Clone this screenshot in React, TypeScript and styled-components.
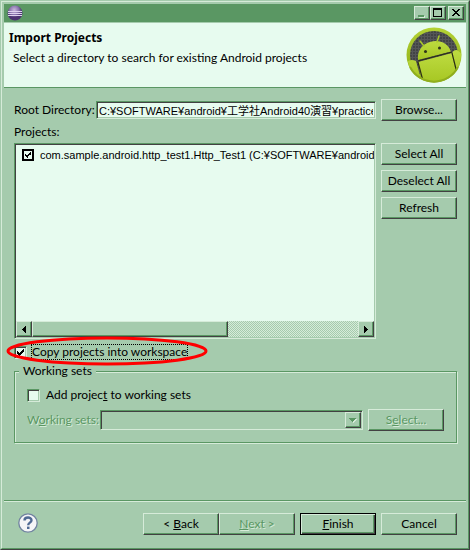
import React, { useState } from "react";
import styled, { createGlobalStyle, css } from "styled-components";

const face = "#a5cbad";
const shade = "#5a9763";
const light = "#d6ebd9";
const dark = "#424142";
const paper = "#e7fbef";

const GlobalStyle = createGlobalStyle`
  *, *::before, *::after { box-sizing: border-box; }
  html, body { margin: 0; padding: 0; }
  body { background: ${face}; }
  body, button, input, select, legend {
    font-family: Lato, "Noto Sans CJK JP", sans-serif;
    font-size: 12px;
    line-height: 14px;
    color: #000;
  }
`;

const raised = css`
  border: 1px solid;
  border-color: ${light} ${dark} ${dark} ${light};
  box-shadow: inset -1px -1px 0 ${shade};
  background: ${face};
`;

const sunken = css`
  border: 1px solid;
  border-color: ${shade} ${light} ${light} ${shade};
  box-shadow: inset 1px 1px 0 ${dark}, inset -1px -1px 0 ${face};
`;

const pathFont = css`
  font-family: "Liberation Sans", "Noto Sans CJK JP", sans-serif;
  font-size: 11px;
`;

const Frame = styled.div`
  min-height: 100vh;
  display: flex;
  flex-direction: column;
  border: 1px solid;
  border-color: ${face} ${dark} ${dark} ${face};
  background: ${face};
`;

const Inner = styled.main`
  flex: 1;
  display: flex;
  flex-direction: column;
  border: 1px solid;
  border-color: ${light} ${shade} ${shade} ${light};
  padding: 2px;
`;

const TitleBar = styled.header`
  height: 18px;
  display: flex;
  align-items: center;
  padding: 0 2px 0 3px;
  background: ${shade};
`;

const WindowButtons = styled.div`
  display: flex;
  margin-left: auto;
`;

const WindowButton = styled.button<{ $apart?: boolean }>`
  ${raised}
  width: 16px;
  height: 14px;
  padding: 0;
  margin-left: ${(p) => (p.$apart ? 2 : 0)}px;
  svg { display: block; }
`;

const Banner = styled.section`
  display: flex;
  justify-content: space-between;
  height: 65px;
  margin-top: 1px;
  padding: 4px 4px 0 5px;
  background: ${paper};
  border-bottom: 1px solid ${shade};
`;

const BannerText = styled.div`
  padding-top: 2px;
`;

const Heading = styled.h1`
  margin: 0;
  font: bold 12px/18px "Noto Sans", sans-serif;
`;

const Message = styled.p`
  margin: 4px 0 0 4px;
`;

const Content = styled.div`
  padding: 11px 9px 0 10px;
`;

const Row = styled.div`
  display: flex;
  align-items: center;
  gap: 5px;
`;

const Button = styled.button<{ $default?: boolean }>`
  ${raised}
  flex: none;
  width: 76px;
  height: 22px;
  padding: 0;
  white-space: nowrap;
  ${(p) =>
    p.$default &&
    css`
      border-color: #000;
      box-shadow: inset 1px 1px 0 ${light}, inset -1px -1px 0 ${dark}, inset -2px -2px 0 ${shade};
    `}
  &:disabled {
    color: ${shade};
    text-shadow: 1px 1px 0 ${light};
  }
`;

const FieldLabel = styled.label<{ $disabled?: boolean }>`
  flex: none;
  width: 77px;
  white-space: nowrap;
  ${(p) => p.$disabled && css`color: ${shade}; text-shadow: 1px 1px 0 ${light}; width: 68px;`}
`;

const TextField = styled.input`
  ${sunken}
  ${pathFont}
  flex: 1;
  min-width: 0;
  height: 18px;
  padding: 0 2px;
  border-radius: 0;
  background: ${paper};
  outline: none;
`;

const ProjectsLabel = styled.div`
  margin: 4px 0;
`;

const ProjectsRow = styled.div`
  display: flex;
  gap: 5px;
`;

const ListBox = styled.div`
  ${sunken}
  flex: 1;
  min-width: 0;
  height: 196px;
  padding: 1px;
  display: flex;
  flex-direction: column;
  background: ${paper};
`;

const ListItem = styled.label`
  ${pathFont}
  flex: 1;
  display: flex;
  align-items: flex-start;
  gap: 6px;
  padding: 3px 0 0 6px;
  overflow: hidden;
  white-space: nowrap;
`;

const tick = `url("data:image/svg+xml,%3Csvg xmlns='http://www.w3.org/2000/svg' viewBox='0 0 7 7' width='7' height='7' shape-rendering='crispEdges'%3E%3Cpath d='M0 2h1v1h1v1h1v-1h1v-1h1v-1h1v-1h1v3h-1v1h-1v1h-1v1h-1v1h-1v-1h-1v-1h-1z'/%3E%3C/svg%3E")`;

const CheckBox = styled.input.attrs({ type: "checkbox" })<{ $bold?: boolean }>`
  appearance: none;
  flex: none;
  width: 13px;
  height: 13px;
  margin: 0;
  ${sunken}
  background-color: ${paper};
  background-position: center;
  background-repeat: no-repeat;
  ${(p) => p.$bold && css`width: 12px; height: 12px; margin-top: 1px; border: 2px solid #000; box-shadow: none; background-size: 6px 6px;`}
  &:checked { background-image: ${tick}; }
`;

const ScrollBar = styled.div`
  display: flex;
  height: 16px;
  background: repeating-conic-gradient(${face} 0 25%, ${light} 0 50%) 0 0 / 2px 2px;
`;

const ScrollArrow = styled.button`
  ${raised}
  width: 16px;
  height: 16px;
  padding: 0;
  svg { display: block; margin: auto; }
`;

const ScrollThumb = styled.div`
  ${raised}
  width: 60%;
`;

const ScrollTrack = styled.div`
  flex: 1;
  display: flex;
`;

const ButtonColumn = styled.div`
  display: flex;
  flex-direction: column;
  gap: 5px;
`;

const CopyRow = styled.div`
  position: relative;
  display: flex;
  width: fit-content;
  margin-top: 5px;
`;

const CheckLabel = styled.label<{ $focus?: boolean }>`
  display: flex;
  align-items: center;
  gap: ${(p) => (p.$focus ? 4 : 6)}px;
`;

const FocusText = styled.span`
  border: 1px dotted #000;
`;

const Highlight = styled.svg`
  position: absolute;
  left: -8px;
  top: -8px;
  pointer-events: none;
`;

const Group = styled.fieldset`
  margin: 4px 0 0;
  min-width: 0;
  padding: 10px 12px 11px;
  border: 1px solid ${shade};
  box-shadow: 1px 1px 0 ${light}, inset 1px 1px 0 ${light};
`;

const Legend = styled.legend`
  margin-left: -8px;
  padding: 0 4px;
  background: ${face};
`;

const SetsRow = styled(Row)`
  margin-top: 7px;
`;

const Combo = styled.div`
  ${sunken}
  position: relative;
  flex: 1;
  min-width: 0;
  height: 20px;
`;

const ComboSelect = styled.select`
  appearance: none;
  display: block;
  width: 100%;
  height: 100%;
  border: 0;
  background: transparent;
`;

const ComboArrow = styled.span`
  ${raised}
  position: absolute;
  top: 1px;
  right: 1px;
  bottom: 1px;
  width: 16px;
  display: grid;
  place-items: center;
  pointer-events: none;
`;

const Footer = styled.footer`
  margin-top: auto;
  padding: 12px 9px 11px 14px;
  display: flex;
  align-items: flex-start;
  border-top: 1px solid ${shade};
  box-shadow: inset 0 1px 0 ${light};
`;

const HelpButton = styled.button`
  padding: 0;
  border: 0;
  background: none;
  svg { display: block; }
`;

const FooterButtons = styled.div`
  display: flex;
  gap: 5px;
  margin-left: auto;
`;

const Pair = styled.div`
  display: flex;
`;

function EclipseIcon() {
  return (
    <svg width="16" height="16" viewBox="0 0 16 16" aria-hidden="true">
      <defs>
        <radialGradient id="orb" cx="45%" cy="30%">
          <stop offset="0" stopColor="#c9b8de" />
          <stop offset="0.6" stopColor="#8a76ae" />
          <stop offset="1" stopColor="#4b3470" />
        </radialGradient>
      </defs>
      <circle cx="8" cy="8" r="7.5" fill="url(#orb)" />
      <path d="M1 6.5h14M1 8.5h14M1 10.5h14" stroke="#ddd2ee" strokeWidth="1" />
    </svg>
  );
}

function AndroidBadge() {
  return (
    <svg width="56" height="56" viewBox="0 0 56 56" role="img" aria-label="Android">
      <defs>
        <linearGradient id="rim" x1="0" y1="0" x2="0" y2="1">
          <stop offset="0" stopColor="#b4d234" />
          <stop offset="1" stopColor="#89a812" />
        </linearGradient>
        <linearGradient id="body" x1="0" y1="0" x2="0" y2="1">
          <stop offset="0" stopColor="#bddb40" />
          <stop offset="1" stopColor="#a6c622" />
        </linearGradient>
        <pattern id="mesh" width="3" height="3" patternUnits="userSpaceOnUse">
          <rect width="3" height="3" fill="#424345" />
          <path d="M0 .5h3M.5 0v3" stroke="#545557" />
        </pattern>
        <clipPath id="disc"><circle cx="28" cy="28" r="27" /></clipPath>
      </defs>
      <circle cx="28" cy="28" r="27.5" fill="url(#rim)" />
      <circle cx="28" cy="28" r="24" fill="url(#mesh)" />
      <g clipPath="url(#disc)">
        <path d="M12 33C11 24 16 17 24 15C33 12 42 16 45 24.5Z" fill="url(#body)" />
        <path d="M12 35L46 26L52 56H16Z" fill="url(#body)" />
        <path d="M0 36Q4 31 10 34L16 56H0ZM46 28Q46 23 51 23L57 28V56H52Z" fill="url(#body)" />
        <path d="M12 34L46 25M12 35L17 54M46 26L51 46" stroke="#2c3014" strokeWidth="1.2" fill="none" />
        <path d="M18 19L14 14M31 15L33 9" stroke="#a9c92a" strokeWidth="1.5" strokeLinecap="round" />
        <circle cx="19.5" cy="24.5" r="1.5" fill="#30351a" />
        <circle cx="33.5" cy="21" r="1.5" fill="#30351a" />
      </g>
      <path d="M4 40A27 27 0 0 0 52 40" fill="none" stroke="#90ae1d" strokeWidth="2" />
    </svg>
  );
}

export default function App() {
  const [project, setProject] = useState(true);
  const [copy, setCopy] = useState(true);
  const [sets, setSets] = useState(false);
  const [root, setRoot] = useState("C:¥SOFTWARE¥android¥工学社Android40演習¥practice");

  return (
    <>
      <GlobalStyle />
      <Frame>
        <Inner>
          <TitleBar>
            <EclipseIcon />
            <WindowButtons>
              <WindowButton aria-label="Minimize" disabled>
                <svg width="14" height="12" shapeRendering="crispEdges">
                  <path d="M4 9h6v2H4z" fill={light} />
                  <path d="M3 8h6v2H3z" fill={shade} />
                </svg>
              </WindowButton>
              <WindowButton aria-label="Maximize">
                <svg width="14" height="12" shapeRendering="crispEdges">
                  <path d="M2 1h9v9H2zM3 3v6h7V3z" fillRule="evenodd" />
                </svg>
              </WindowButton>
              <WindowButton aria-label="Close" $apart>
                <svg width="14" height="12" shapeRendering="crispEdges">
                  <path d="M3 2h2v1h1v1h2V3h1V2h2v1h-1v1H9v1H8v1h1v1h1v1h1v1H9V8H8V7H6v1H5v1H3V8h1V7h1V6h1V5H5V4H4V3H3z" />
                </svg>
              </WindowButton>
            </WindowButtons>
          </TitleBar>

          <Banner>
            <BannerText>
              <Heading>Import Projects</Heading>
              <Message>Select a directory to search for existing Android projects</Message>
            </BannerText>
            <AndroidBadge />
          </Banner>

          <Content>
            <Row>
              <FieldLabel htmlFor="root">Root Directory:</FieldLabel>
              <TextField id="root" value={root} onChange={(e) => setRoot(e.target.value)} />
              <Button>Browse...</Button>
            </Row>
            <ProjectsLabel>Projects:</ProjectsLabel>
            <ProjectsRow>
              <ListBox>
                <ListItem>
                  <CheckBox $bold checked={project} onChange={() => setProject(!project)} />
                  com.sample.android.http_test1.Http_Test1 (C:¥SOFTWARE¥android
                </ListItem>
                <ScrollBar>
                  <ScrollArrow aria-label="Scroll left">
                    <svg width="4" height="7" shapeRendering="crispEdges"><path d="M4 0v7H3V6H2V5H1V4H0V3h1V2h1V1h1V0z" /></svg>
                  </ScrollArrow>
                  <ScrollTrack><ScrollThumb /></ScrollTrack>
                  <ScrollArrow aria-label="Scroll right">
                    <svg width="4" height="7" shapeRendering="crispEdges"><path d="M0 0v7h1V6h1V5h1V4h1V3H3V2H2V1H1V0z" /></svg>
                  </ScrollArrow>
                </ScrollBar>
              </ListBox>
              <ButtonColumn>
                <Button>Select All</Button>
                <Button>Deselect All</Button>
                <Button>Refresh</Button>
              </ButtonColumn>
            </ProjectsRow>

            <CopyRow>
              <CheckLabel $focus>
                <CheckBox checked={copy} onChange={() => setCopy(!copy)} />
                <FocusText>Copy projects into workspace</FocusText>
              </CheckLabel>
              <Highlight width="202" height="30" viewBox="0 0 202 30" aria-hidden="true">
                <ellipse cx="101" cy="15" rx="99" ry="13" fill="none" stroke="#f00" strokeWidth="3" />
              </Highlight>
            </CopyRow>

            <Group>
              <Legend>Working sets</Legend>
              <CheckLabel>
                <CheckBox checked={sets} onChange={() => setSets(!sets)} />
                <span>Add projec<u>t</u> to working sets</span>
              </CheckLabel>
              <SetsRow>
                <FieldLabel htmlFor="sets" $disabled>W<u>o</u>rking sets:</FieldLabel>
                <Combo>
                  <ComboSelect id="sets" disabled />
                  <ComboArrow>
                    <svg width="8" height="5" shapeRendering="crispEdges">
                      <path d="M1 1h7v1H7v1H6v1H5v1H4V4H3V3H2V2H1z" fill={light} />
                      <path d="M0 0h7v1H6v1H5v1H4v1H3V3H2V2H1V1H0z" fill={shade} />
                    </svg>
                  </ComboArrow>
                </Combo>
                <Button disabled>S<u>e</u>lect...</Button>
              </SetsRow>
            </Group>
          </Content>

          <Footer>
            <HelpButton aria-label="Help">
              <svg width="20" height="20" viewBox="0 0 20 20" fill="none">
                <circle cx="10" cy="10" r="9.2" fill="#f5f5f7" stroke="#7183a0" strokeWidth="1.3" />
                <path d="M6.5 7.4C6.5 3.6 13.5 3.6 13.5 7.2C13.5 9.6 10.2 9.7 10.2 12.2" stroke="#506a94" strokeWidth="2.4" />
                <path d="M9 13.6h2.5V16H9z" fill="#506a94" />
              </svg>
            </HelpButton>
            <FooterButtons>
              <Pair>
                <Button>&lt; <u>B</u>ack</Button>
                <Button disabled><u>N</u>ext &gt;</Button>
              </Pair>
              <Button $default><u>F</u>inish</Button>
              <Button>Cancel</Button>
            </FooterButtons>
          </Footer>
        </Inner>
      </Frame>
    </>
  );
}
